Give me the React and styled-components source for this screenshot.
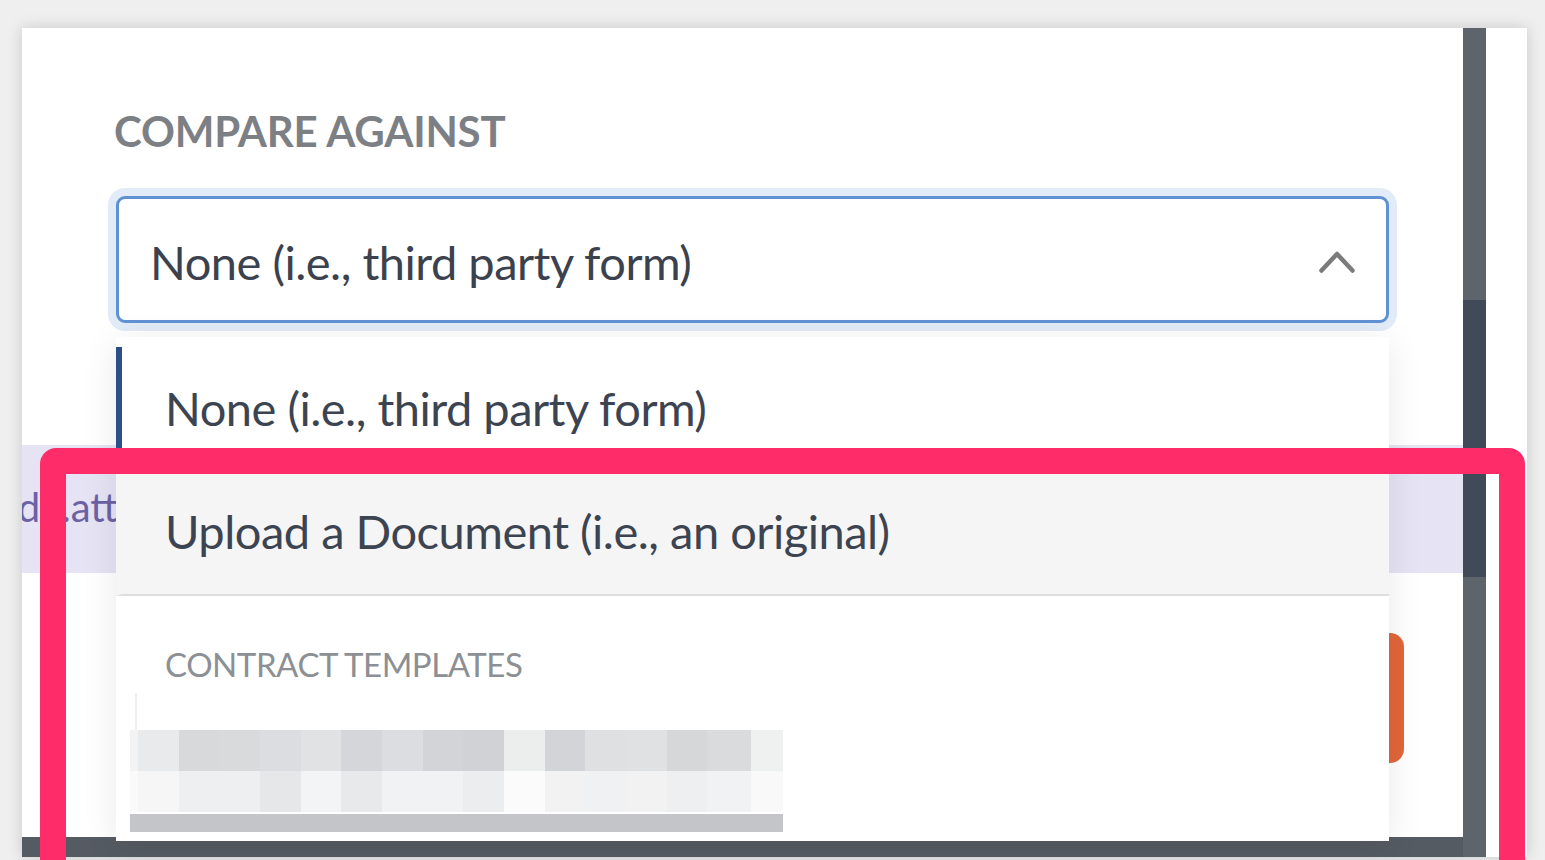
import React from 'react';
import styled, { createGlobalStyle } from 'styled-components';

const GlobalStyle = createGlobalStyle`
  html, body {
    margin: 0;
    padding: 0;
  }
  body {
    background: #efefef;
    font-family: Lato, 'Open Sans', sans-serif;
  }
`;

const pixelRows = [
  ['#f3f3f4', '#e9eaeb', '#d8d9db', '#d9dadc', '#dcdde0', '#e1e2e4', '#d5d6d9', '#dcdde0', '#d3d4d7', '#d1d2d5', '#eceeed', '#d3d4d7', '#dfe0e2', '#e0e1e3', '#d6d7d9', '#dadbdd', '#eff0f0'],
  ['#fafafa', '#f6f6f7', '#eeeff0', '#eeeff0', '#e6e7e9', '#f3f4f5', '#e8e9eb', '#f1f2f3', '#f1f2f3', '#ecedef', '#fbfbfb', '#f2f2f3', '#f0f1f2', '#f2f2f3', '#eeeff0', '#f1f2f3', '#f9f9f9']
];
const pixelCols = '8px 41px 40px 41px 41px 40px 41px 41px 40px 41px 41px 40px 41px 41px 40px 44px 32px';

function App() {
  return (
    <>
      <GlobalStyle />
      <Page>
        <Frame>
          <Backdrop>
            <Modal>
              <Field>
                <Label>COMPARE AGAINST</Label>
                <SelectWrap>
                  <SelectBox>
                    <SelectValue>None (i.e., third party form)</SelectValue>
                    <svg width="36" height="22" viewBox="0 0 36 22">
                      <polyline
                        points="2.5,19.5 18,3 33.5,19.5"
                        fill="none"
                        stroke="#7b7b7b"
                        strokeWidth="4.5"
                        strokeLinecap="round"
                        strokeLinejoin="round"
                      />
                    </svg>
                  </SelectBox>
                  <Menu>
                    <Option $selected>None (i.e., third party form)</Option>
                    <Option $hover>Upload a Document (i.e., an original)</Option>
                    <GroupHeader>CONTRACT TEMPLATES</GroupHeader>
                    <Stub />
                    <Blurred>
                      {pixelRows.map((row, r) => (
                        <PixelRow key={r} style={{ gridTemplateColumns: pixelCols }}>
                          {row.map((c, i) => (
                            <Pixel key={i} style={{ background: c }} />
                          ))}
                        </PixelRow>
                      ))}
                      <BlurBar />
                    </Blurred>
                  </Menu>
                </SelectWrap>
              </Field>
              <Banner>Guide.attached</Banner>
              <ActionRow>
                <PrimaryButton>Compare</PrimaryButton>
              </ActionRow>
            </Modal>
            <SideRail>
              <RailThumb />
            </SideRail>
            <BottomRail />
          </Backdrop>
        </Frame>
        <Highlight />
      </Page>
    </>
  );
}

const Page = styled.div`
  position: relative;
  width: 1545px;
  height: 860px;
  overflow: hidden;
  padding: 28px 0 0 22px;
  box-sizing: border-box;
`;

const Frame = styled.div`
  display: flex;
  width: 1505px;
  height: 829px;
  background: #fff;
  box-shadow: 0 0 14px rgba(0, 0, 0, 0.16);
`;

const Backdrop = styled.div`
  display: grid;
  grid-template-columns: 1441px 23px;
  grid-template-rows: 809px 20px;
  width: 1464px;
  background: #5b6169;
`;

const Modal = styled.div`
  grid-column: 1;
  grid-row: 1;
  position: relative;
  background: #fff;
  padding-top: 82px;
  box-sizing: border-box;
`;

const SideRail = styled.div`
  grid-column: 2;
  grid-row: 1 / span 2;
  background: #5e646c;
  padding-top: 272px;
`;

const RailThumb = styled.div`
  height: 277px;
  background: #414a59;
`;

const BottomRail = styled.div`
  grid-column: 1;
  grid-row: 2;
  background: #555b62;
`;

const Field = styled.div`
  padding: 0 74px 0 94px;
`;

const Label = styled.div`
  font-family: Lato, sans-serif;
  font-weight: 700;
  font-size: 42px;
  line-height: 1;
  color: #7c8085;
  letter-spacing: -0.2px;
  margin-left: -2px;
`;

const SelectWrap = styled.div`
  position: relative;
  margin-top: 44px;
`;

const SelectBox = styled.div`
  display: flex;
  align-items: center;
  justify-content: space-between;
  height: 127px;
  box-sizing: border-box;
  padding: 0 31px 0 31px;
  border: 3px solid #6092d3;
  border-radius: 9px;
  box-shadow: 0 0 0 8px #e2ecf9;
  background: #fff;

  svg {
    margin-top: 4px;
  }
`;

const SelectValue = styled.span`
  font-size: 47px;
  line-height: 1.2;
  letter-spacing: -0.5px;
  color: #3b424e;
  margin-top: 6px;
`;

const Menu = styled.div`
  position: absolute;
  top: calc(100% + 14px);
  left: 0;
  right: 0;
  height: 504px;
  overflow: hidden;
  background: #fff;
  padding-top: 10px;
  box-sizing: border-box;
  box-shadow: 0 6px 34px rgba(0, 0, 0, 0.09);
  z-index: 5;
`;

const Option = styled.div`
  font-size: 47px;
  line-height: 1.2;
  letter-spacing: -0.5px;
  color: #3d4451;
  padding: ${(p) => (p.$hover ? '34px 46px 34px 43px' : '33px 46px 33px 43px')};
  border-left: 6px solid ${(p) => (p.$selected ? '#2e4e87' : 'transparent')};
  background: ${(p) => (p.$hover ? '#f5f5f5' : '#fff')};
  border-bottom: ${(p) => (p.$hover ? '2px solid #dedede' : 'none')};
`;

const GroupHeader = styled.div`
  font-size: 33px;
  line-height: 1.2;
  letter-spacing: -0.45px;
  color: #8c8f93;
  padding: 49px 0 0 49px;
`;

const Stub = styled.div`
  height: 37px;
  margin: 9px 0 0 19px;
  border-left: 2px solid #f0f0f1;
`;

const Blurred = styled.div`
  display: flex;
  flex-direction: column;
  width: 653px;
  margin-left: 14px;
`;

const PixelRow = styled.div`
  display: grid;
  height: 41px;
`;

const Pixel = styled.div``;

const BlurBar = styled.div`
  height: 18px;
  margin-top: 2px;
  background: #c4c5c8;
`;

const Banner = styled.div`
  margin-top: 122px;
  height: 128px;
  box-sizing: border-box;
  padding-top: 38px;
  background: #e6e3f4;
  color: #6b62a4;
  font-size: 40px;
  line-height: 1.2;
  white-space: nowrap;
  overflow: hidden;
  text-indent: -65px;
`;

const ActionRow = styled.div`
  display: flex;
  justify-content: flex-end;
  margin-top: 60px;
  padding-right: 59px;
`;

const PrimaryButton = styled.div`
  display: flex;
  align-items: center;
  justify-content: center;
  width: 300px;
  height: 130px;
  border-radius: 14px;
  background: #e2663a;
  color: #fff;
  font-size: 40px;
  font-weight: 700;
`;

const Highlight = styled.div`
  position: absolute;
  left: 40px;
  top: 448px;
  width: 1485px;
  height: 460px;
  box-sizing: border-box;
  border: 26px solid #ff2c6a;
  border-radius: 16px;
  z-index: 10;
  pointer-events: none;
`;

export default App;
